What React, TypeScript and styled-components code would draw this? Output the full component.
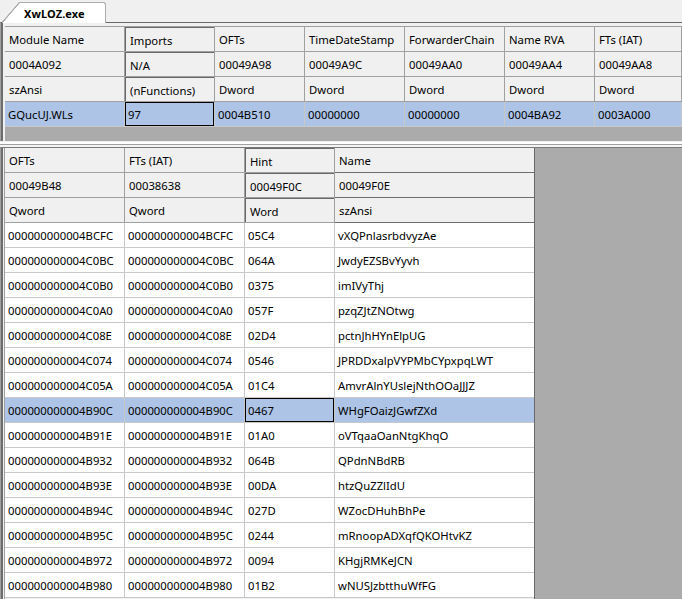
import React from 'react';
import styled, { createGlobalStyle, css } from 'styled-components';

const Global = createGlobalStyle`
  html, body { margin: 0; padding: 0; background: #f0f0f0; }
  body {
    font-family: "Noto Sans", "Open Sans", sans-serif;
    font-size: 11.3px;
    color: #000;
    overflow: hidden;
  }
`;

const Window = styled.div`
  width: 682px;
  height: 599px;
  display: flex;
  flex-direction: column;
  overflow: hidden;
  background: #f0f0f0;
`;

const TabBar = styled.div`
  height: 22px;
  flex: 0 0 22px;
  display: flex;
  align-items: flex-end;
`;

const Tab = styled.div`
  position: relative;
  z-index: 1;
  margin-left: 20px;
  margin-bottom: -1px;
  width: 86px;
  height: 21px;
  box-sizing: border-box;
  background: #fff;
  border-top: 1px solid #acacac;
  border-right: 1px solid #acacac;
  border-top-right-radius: 3px;
  display: flex;
  align-items: center;
  padding: 0 0 0 4px;
  font-size: 11px;
  font-weight: 700;
  letter-spacing: 0.1px;
  &::before {
    content: '';
    position: absolute;
    left: -18px;
    top: -1px;
    width: 18px;
    height: 21px;
    background: linear-gradient(
      to bottom right,
      transparent calc(50% - 1px),
      #acacac calc(50% - 0.5px),
      #acacac calc(50% + 0.3px),
      #fff calc(50% + 0.8px)
    );
  }
`;

const TopPane = styled.div`
  flex: 0 0 auto;
  border-top: 1px solid #696969;
  border-left: 1px solid #a0a0a0;
  box-shadow: inset 2px 0 0 #6d6d6d;
  padding: 3px 0 0 4px;
  display: flex;
  flex-direction: column;
`;

const TopTable = styled.div`
  border-top: 1px solid #a0a0a0;
  display: flex;
  flex-direction: column;
`;

const Band = styled.div`
  height: 14px;
  background: #ababab;
`;

const Splitter = styled.div`
  height: 6px;
  flex: 0 0 6px;
  background: linear-gradient(
    #f0f0f0 0 1px,
    #ffffff 1px 3px,
    #a0a0a0 3px 4px,
    #f4f4f4 4px 6px
  );
`;

const BottomPane = styled.div`
  flex: 1 1 auto;
  min-height: 0;
  display: flex;
  border-top: 1px solid #7a7a7a;
  border-left: 1px solid #a0a0a0;
  box-shadow: inset 2px 0 0 #6d6d6d;
  padding-left: 3px;
  overflow: hidden;
`;

const BottomTable = styled.div`
  flex: 0 0 auto;
  display: flex;
  flex-direction: column;
  border-left: 1px solid #a0a0a0;
  border-right: 1px solid #696969;
`;

const Workspace = styled.div`
  flex: 1 1 auto;
  background: #ababab;
`;

const Row = styled.div`
  display: flex;
  height: 25px;
  flex: 0 0 25px;
`;

type CellProps = {
  $w?: number;
  $grow?: boolean;
  $head?: boolean;
  $pressed?: boolean;
  $sel?: boolean;
  $focus?: boolean;
  $strong?: boolean;
  $noRight?: boolean;
};

const Cell = styled.div<CellProps>`
  box-sizing: border-box;
  ${(p) =>
    p.$grow
      ? css`
          flex: 1 1 0;
          min-width: 0;
        `
      : css`
          flex: 0 0 ${p.$w}px;
          width: ${p.$w}px;
        `}
  height: 25px;
  display: flex;
  align-items: center;
  white-space: nowrap;
  overflow: hidden;
  border-right: ${(p) => (p.$noRight ? 'none' : `1px solid ${p.$head ? '#a0a0a0' : '#c8c8c8'}`)};
  border-bottom: 1px solid
    ${(p) => (p.$strong ? '#6d6d6d' : p.$head ? '#a0a0a0' : '#c8c8c8')};
  background: ${(p) => (p.$head ? '#f0f0f0' : p.$sel ? '#adc4e6' : '#ffffff')};
  padding: ${(p) =>
    p.$head ? (p.$pressed ? '3px 0 0 5px' : '1px 0 0 4px') : '0 0 0 3px'};
  box-shadow: ${(p) =>
    p.$pressed
      ? 'inset 1px 1px 0 #696969'
      : p.$focus
      ? 'inset 0 0 0 1px #000'
      : 'none'};
`;

const topCols = [120, 90, 90, 100, 100, 90, 0];
const topHead = [
  ['Module Name', 'Imports', 'OFTs', 'TimeDateStamp', 'ForwarderChain', 'Name RVA', 'FTs (IAT)'],
  ['0004A092', 'N/A', '00049A98', '00049A9C', '00049AA0', '00049AA4', '00049AA8'],
  ['szAnsi', '(nFunctions)', 'Dword', 'Dword', 'Dword', 'Dword', 'Dword'],
];
const topData = ['GQucUJ.WLs', '97', '0004B510', '00000000', '00000000', '0004BA92', '0003A000'];

const botCols = [120, 120, 90, 199];
const botHead = [
  ['OFTs', 'FTs (IAT)', 'Hint', 'Name'],
  ['00049B48', '00038638', '00049F0C', '00049F0E'],
  ['Qword', 'Qword', 'Word', 'szAnsi'],
];
const botData: [string, string, string][] = [
  ['4BCFC', '05C4', 'vXQPnlasrbdvyzAe'],
  ['4C0BC', '064A', 'JwdyEZSBvYyvh'],
  ['4C0B0', '0375', 'imIVyThj'],
  ['4C0A0', '057F', 'pzqZJtZNOtwg'],
  ['4C08E', '02D4', 'pctnJhHYnElpUG'],
  ['4C074', '0546', 'JPRDDxalpVYPMbCYpxpqLWT'],
  ['4C05A', '01C4', 'AmvrAlnYUslejNthOOaJJJZ'],
  ['4B90C', '0467', 'WHgFOaizJGwfZXd'],
  ['4B91E', '01A0', 'oVTqaaOanNtgKhqO'],
  ['4B932', '064B', 'QPdnNBdRB'],
  ['4B93E', '00DA', 'htzQuZZlIdU'],
  ['4B94C', '027D', 'WZocDHuhBhPe'],
  ['4B95C', '0244', 'mRnoopADXqfQKOHtvKZ'],
  ['4B972', '0094', 'KHgjRMKeJCN'],
  ['4B980', '01B2', 'wNUSJzbtthuWfFG'],
];
const SELECTED = 7;

export default function App() {
  return (
    <>
      <Global />
      <Window>
        <TabBar>
          <Tab>XwLOZ.exe</Tab>
        </TabBar>
        <TopPane>
          <TopTable>
            {topHead.map((r, ri) => (
              <Row key={ri}>
                {r.map((t, ci) => (
                  <Cell
                    key={ci}
                    $head
                    $w={topCols[ci]}
                    $grow={ci === topCols.length - 1}
                    $pressed={ci === 1}
                  >
                    {t}
                  </Cell>
                ))}
              </Row>
            ))}
            <Row>
              {topData.map((t, ci) => (
                <Cell
                  key={ci}
                  $sel
                  $w={topCols[ci]}
                  $grow={ci === topCols.length - 1}
                  $focus={ci === 1}
                >
                  {t}
                </Cell>
              ))}
            </Row>
          </TopTable>
          <Band />
        </TopPane>
        <Splitter />
        <BottomPane>
          <BottomTable>
            {botHead.map((r, ri) => (
              <Row key={ri}>
                {r.map((t, ci) => (
                  <Cell
                    key={ci}
                    $head
                    $w={botCols[ci]}
                    $pressed={ci === 2}
                    $strong={ci === 3}
                    $noRight={ci === 3}
                  >
                    {t}
                  </Cell>
                ))}
              </Row>
            ))}
            {botData.map(([addr, hint, name], ri) => {
              const sel = ri === SELECTED;
              const full = '00000000000' + addr;
              return (
                <Row key={ri}>
                  <Cell $w={botCols[0]} $sel={sel}>{full}</Cell>
                  <Cell $w={botCols[1]} $sel={sel}>{full}</Cell>
                  <Cell $w={botCols[2]} $sel={sel} $focus={sel}>{hint}</Cell>
                  <Cell $w={botCols[3]} $sel={sel} $noRight>{name}</Cell>
                </Row>
              );
            })}
          </BottomTable>
          <Workspace />
        </BottomPane>
      </Window>
    </>
  );
}
